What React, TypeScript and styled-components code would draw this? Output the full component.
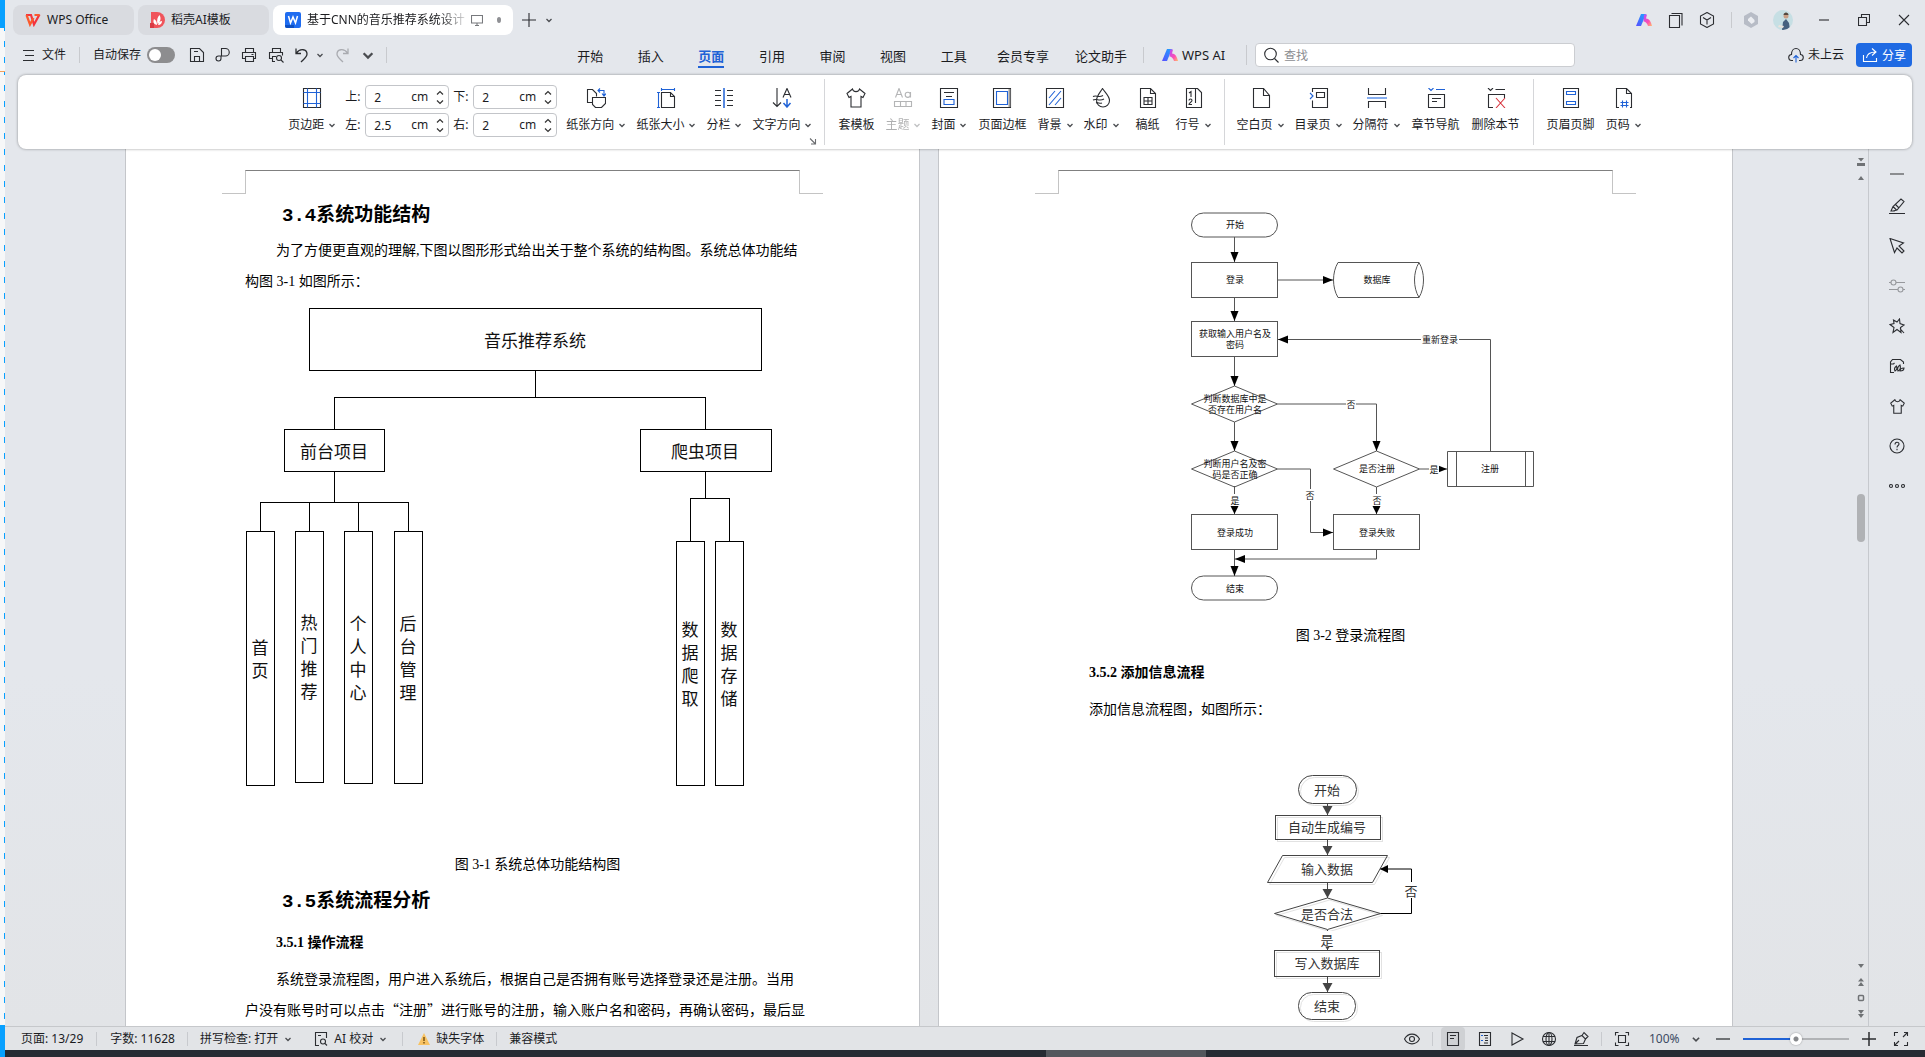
import React from "react";
import styled, { createGlobalStyle, css } from "styled-components";

const UI = `"Noto Sans", "Noto Sans CJK SC", sans-serif`;
const CJK = `"Noto Sans CJK SC", sans-serif`;
const SERIF = `"Liberation Serif", "Noto Sans CJK SC", serif`;
const MONO = `"Liberation Mono", "Noto Sans CJK SC", monospace`;
const INK = "#2b2d31";
const BLUE = "#1f62d6";

const GlobalStyle = createGlobalStyle`
  * { box-sizing: border-box; }
  body { margin: 0; background: #e4e7ec; font-family: ${UI}; font-size: 12px; color: #1b1c1f; }
  button, input { font: inherit; color: inherit; }
  button { border: 0; background: none; padding: 0; white-space: nowrap; }
  h2, h3, p, figure { margin: 0; }
`;

/* ---------- shell ---------- */

const Desktop = styled.div`
  display: flex;
  height: 100vh;
  overflow: hidden;
`;

const BackWindow = styled.div`
  flex: 0 0 5px;
  display: flex;
  flex-direction: column;
  background: #f6f7f8;
`;

const BackBlock = styled.div<{ $h: number }>`
  height: ${(p) => p.$h}px;
  background: #08a0ff;
`;

const BackEdge = styled.div<{ $h?: number }>`
  ${(p) => (p.$h ? `height: ${p.$h}px;` : "flex: 1;")}
  border-bottom: 1px solid ${(p) => (p.$h ? "#f3a05c" : "transparent")};
  background: linear-gradient(#08a0ff 40%, transparent 40%) right 13px / 1px 16px repeat-y;
`;

const Shell = styled.div`
  flex: 1;
  min-width: 0;
  display: flex;
  flex-direction: column;
`;

/* ---------- title bar ---------- */

const TitleBar = styled.header`
  display: flex;
  align-items: center;
  height: 38px;
  padding: 2px 0 0 8px;
`;

const Tab = styled.div<{ $w: number; $active?: boolean }>`
  display: flex;
  align-items: center;
  gap: 6px;
  width: ${(p) => p.$w}px;
  height: 30px;
  margin-right: 4px;
  padding: 0 12px;
  border-radius: 8px;
  background: ${(p) => (p.$active ? "#fff" : "#d9dbe0")};
`;

const TabTitle = styled.span<{ $fade?: boolean }>`
  white-space: nowrap;
  line-height: 20px;
  ${(p) =>
    p.$fade &&
    css`
      mask-image: linear-gradient(to right, #000 84%, rgba(0, 0, 0, 0.15));
    `}
`;

const UnsavedDot = styled.span`
  width: 6px;
  height: 6px;
  margin-left: 8px;
  border-radius: 50%;
  background: #8f9094;
`;

const IconButton = styled.button<{ $w?: number; $h?: number; $active?: boolean }>`
  display: flex;
  align-items: center;
  justify-content: center;
  flex: none;
  width: ${(p) => p.$w ?? 24}px;
  height: ${(p) => p.$h ?? 24}px;
  border-radius: 4px;
  background: ${(p) => (p.$active ? "#cfd1d4" : "none")};
`;

const Spacer = styled.div`
  flex: 1;
`;

const Divider = styled.span<{ $h?: number; $m?: number }>`
  flex: none;
  width: 1px;
  height: ${(p) => p.$h ?? 16}px;
  margin: 0 ${(p) => p.$m ?? 0}px;
  background: #c8cace;
`;

/* ---------- menu row ---------- */

const MenuRow = styled.div`
  display: flex;
  align-items: center;
  height: 37px;
  padding: 0 13px 3px 17px;
`;

const QuickBar = styled.div`
  display: flex;
  align-items: center;
`;

const FileButton = styled.button`
  display: flex;
  align-items: center;
  gap: 6px;
  line-height: 20px;
`;

const AutoSave = styled.label`
  display: flex;
  align-items: center;
  gap: 6px;
  margin-right: 9px;
  line-height: 20px;
`;

const Switch = styled.input`
  appearance: none;
  width: 28px;
  height: 16px;
  margin: 0;
  padding: 2px;
  border-radius: 8px;
  background: #8d8d8f;
  &::before {
    content: "";
    display: block;
    width: 12px;
    height: 12px;
    border-radius: 50%;
    background: #fff;
  }
`;

const MenuNav = styled.nav`
  display: flex;
  align-items: center;
  margin: 0 auto;
  padding-right: 48px;
  font-size: 13px;
`;

const EvenMenus = styled.div`
  display: flex;
  width: 424px;
`;

const MenuItem = styled.button<{ $active?: boolean; $wide?: boolean }>`
  ${(p) => (p.$wide ? "padding: 0 13px;" : "flex: 1;")}
  ${(p) => p.$active && `color: ${BLUE}; font-weight: 700;`}
`;

const MenuText = styled.span<{ $active?: boolean }>`
  display: inline-block;
  padding-top: 4px;
  line-height: 20px;
  border-bottom: 2px solid ${(p) => (p.$active ? BLUE : "transparent")};
`;

const AiButton = styled.button`
  display: flex;
  align-items: center;
  gap: 4px;
  margin: 0 21px 0 15px;
  line-height: 20px;
`;

const SearchBox = styled.label`
  display: flex;
  align-items: center;
  gap: 5px;
  width: 320px;
  height: 24px;
  margin-left: 8px;
  padding: 0 7px;
  border: 1px solid #cbcdd1;
  border-radius: 4px;
  background: #fff;
  font-size: 12px;
`;

const SearchInput = styled.input`
  flex: 1;
  min-width: 0;
  border: 0;
  outline: 0;
  padding: 0;
  background: none;
  &::placeholder { color: #8b8d91; opacity: 1; }
`;

const CloudButton = styled.button`
  display: flex;
  align-items: center;
  gap: 4px;
  margin-right: 12px;
  line-height: 20px;
`;

const ShareButton = styled.button`
  display: flex;
  align-items: center;
  gap: 4px;
  height: 24px;
  padding: 0 6px;
  border-radius: 4px;
  background: #1f6ae3;
  color: #fff;
`;

/* ---------- ribbon ---------- */

const Ribbon = styled.section`
  position: relative;
  z-index: 1;
  display: flex;
  justify-content: center;
  height: 74px;
  margin: 0 13px;
  border-radius: 8px;
  background: #fff;
  box-shadow: 0 0 3px rgba(0, 0, 0, 0.4);
`;

const RibbonGroup = styled.div`
  display: flex;
  align-items: flex-start;
  padding-top: 13px;
`;

const Tool = styled.button<{ $menu?: boolean; $off?: boolean }>`
  display: flex;
  flex-direction: column;
  align-items: center;
  gap: 9px;
  min-width: 46px;
  padding: 0 ${(p) => (p.$menu ? 5 : 6)}px;
  opacity: ${(p) => (p.$off ? 0.35 : 1)};
`;

const ToolLabel = styled.span`
  display: flex;
  align-items: center;
  gap: 4px;
  line-height: 16px;
`;

const RibbonRule = styled.span`
  align-self: center;
  width: 1px;
  height: 66px;
  margin: 0 7px;
  background: #d5d6d9;
`;

const Launcher = styled.button`
  align-self: flex-end;
  display: flex;
  width: 8px;
  height: 8px;
  margin: 0 0 4px -8px;
`;

const Margins = styled.div`
  display: grid;
  grid-template-columns: 16px 84px 16px 84px;
  gap: 4px;
  margin: -3px 4px 0;
  align-items: center;
`;

const MarginLabel = styled.label`
  white-space: nowrap;
  line-height: 16px;
`;

const Spin = styled.div`
  display: flex;
  align-items: center;
  height: 24px;
  padding: 0 3px 0 8px;
  border: 1px solid #c3c5c9;
  border-radius: 4px;
`;

const SpinInput = styled.input`
  width: 37px;
  border: 0;
  outline: 0;
  padding: 0;
  background: none;
`;

const SpinUnit = styled.span`
  flex: 1;
  line-height: 16px;
`;

const SpinButtons = styled.span`
  display: flex;
  flex-direction: column;
  gap: 5px;
`;

const SpinButton = styled.button`
  display: flex;
  padding: 0 1px;
`;

/* ---------- workspace ---------- */

const Workspace = styled.div`
  flex: 1;
  min-height: 0;
  display: flex;
  background: linear-gradient(#e4e7ec 60%, #e2e4e7);
`;

const Canvas = styled.main`
  flex: 1;
  min-width: 0;
  display: flex;
  justify-content: center;
  gap: 18px;
  overflow: hidden;
`;

const Page = styled.article`
  flex: 0 0 795px;
  overflow: hidden;
  padding-top: 21px;
  border: solid #c4c6ca;
  border-width: 0 1px;
  background: #fff;
  color: #000;
`;

const HeaderMarks = styled.div`
  display: flex;
  height: 24px;
  margin: 0 96px;
`;

const MarkTick = styled.span`
  width: 23px;
  border-bottom: 1px solid #c4c4c4;
`;

const MarkBox = styled.span`
  flex: 1;
  border: solid #c4c4c4;
  border-width: 1px 1px 0;
  border-top-color: #808080;
`;

const Body = styled.div`
  padding: 0 119px;
  font-size: 14px;
`;

const H2 = styled.h2`
  padding: 3px 0 0 37px;
  font: 700 19px/38px ${MONO};
`;

const H3 = styled.h3`
  padding: 2px 0 0 31px;
  font: 700 14px/40px ${SERIF};
`;

const Para = styled.p<{ $cjk?: boolean }>`
  font-family: ${(p) => (p.$cjk ? CJK : SERIF)};
  line-height: 31px;
  white-space: nowrap;
`;

const Line = styled.span<{ $indent?: boolean }>`
  display: block;
  padding-left: ${(p) => (p.$indent ? 31 : 0)}px;
`;

const Caption = styled.figcaption`
  padding-left: 30px;
  text-align: center;
  font-family: ${SERIF};
  line-height: 31px;
`;

const Drawing = styled.svg<{ $size: number; $ink?: string }>`
  display: block;
  width: 100%;
  overflow: visible;
  font-family: ${CJK};
  font-size: ${(p) => p.$size}px;
  text-anchor: middle;
  fill: none;
  stroke-width: 1px;
  text { stroke: none; fill: ${(p) => p.$ink ?? "#111"}; dominant-baseline: central; }
`;

const ScrollColumn = styled.div`
  flex: 0 0 15px;
  display: flex;
  flex-direction: column;
  align-items: center;
  padding: 5px 0 4px;
`;

const ScrollButton = styled.button`
  display: flex;
  align-items: center;
  justify-content: center;
  width: 12px;
  height: 16px;
`;

const Track = styled.div`
  flex: 1;
  display: flex;
  flex-direction: column;
`;

const TrackSpace = styled.span<{ $grow: number }>`
  flex: ${(p) => p.$grow};
`;

const Thumb = styled.span`
  width: 8px;
  height: 48px;
  border-radius: 4px;
  background: #b0b2b5;
`;

const SidePanel = styled.aside`
  flex: 0 0 57px;
  display: flex;
  flex-direction: column;
  align-items: center;
  gap: 16px;
  padding-top: 21px;
  border-left: 1px solid #c6c9ce;
`;

/* ---------- status bar ---------- */

const StatusBar = styled.footer`
  display: flex;
  align-items: center;
  height: 24px;
  padding: 0 12px 0 16px;
  border-top: 1px solid #c6c8cb;
  background: #e2e4e7;
`;

const StatusItem = styled.button<{ $gap?: number }>`
  display: flex;
  align-items: center;
  gap: 6px;
  margin-right: ${(p) => p.$gap ?? 0}px;
  line-height: 20px;
`;

const StatusTools = styled.div`
  display: flex;
  align-items: center;
  gap: 8px;
  margin-left: auto;
`;

const ZoomValue = styled.button`
  display: flex;
  align-items: center;
  justify-content: space-between;
  width: 61px;
  padding: 0 2px 0 7px;
  color: #3c4a63;
`;

const ZoomSlider = styled.input`
  appearance: none;
  width: 106px;
  height: 14px;
  margin: 0;
  background: linear-gradient(to right, ${BLUE} 50%, #b1b3b6 50%) center / 100% 2px no-repeat;
  &::-webkit-slider-thumb {
    appearance: none;
    width: 12px;
    height: 12px;
    border-radius: 50%;
    background: radial-gradient(#86888b 2px, #fff 3px);
    box-shadow: 0 0 2px rgba(0, 0, 0, 0.4);
  }
`;

const Taskbar = styled.div`
  display: flex;
  height: 7px;
  background: #272b33;
`;

const TaskSlot = styled.span<{ $grow: number; $lit?: boolean }>`
  flex: ${(p) => p.$grow};
  background: ${(p) => (p.$lit ? "#54575d" : "none")};
`;

/* ---------- icons ---------- */

const Glyph = styled.svg`
  flex: none;
  fill: none;
`;

type IconProps = { s?: number; w?: number; c?: string; children: React.ReactNode };
const Icon = ({ s = 16, w, c = INK, children }: IconProps) => (
  <Glyph width={w ?? s} height={s} viewBox={`0 0 ${w ?? s} ${s}`} stroke={c} strokeWidth={1.1} aria-hidden="true">
    {children}
  </Glyph>
);

const Chevron = ({ s = 8, c = "#4a4c50" }: { s?: number; c?: string }) => (
  <Glyph width={s} height={s} viewBox="0 0 8 8" stroke={c} strokeWidth={1.3} aria-hidden="true">
    <path d="M1.500 3l2.500 2.500L6.500 3" />
  </Glyph>
);

const Shirt = ({ s = 20 }: { s?: number }) => (
  <Glyph width={s} height={s} viewBox="0 0 20 20" stroke={INK} strokeWidth={(20 / s) * 1.1} aria-hidden="true">
    <path d="M6.500 1L1 5.500l2 4 2-1V19h10V8.500l2 1 2-4L13.500 1C13 4.500 7 4.500 6.500 1z" />
  </Glyph>
);

const AiLogo = () => (
  <svg width="16" height="14" viewBox="0 0 16 14" aria-hidden="true">
    <defs>
      <linearGradient id="aiA" x1="0" y1="1" x2="1" y2="0"><stop offset="0" stopColor="#5a4dff" /><stop offset="1" stopColor="#19a8ff" /></linearGradient>
      <linearGradient id="aiB" x1="0" y1="0" x2="1" y2="1"><stop offset="0" stopColor="#b04cff" /><stop offset=".6" stopColor="#ff4fb0" /><stop offset="1" stopColor="#ffc06a" /></linearGradient>
    </defs>
    <path d="M5 1h5L5 13H0z" fill="url(#aiA)" />
    <path d="M8 1.500h3l-1 4c3 0 5 3 6 7.500H12C11 10 9.500 8.500 7.500 8.500z" fill="url(#aiB)" />
  </svg>
);

const toolIcons: Record<string, React.ReactNode> = {
  margins: <><path d="M1.500.500h17v19h-17z" /><path d="M5.500.500v19M14.500.500v19M1.500 4.500h17M1.500 15.500h17" stroke={BLUE} /></>,
  orient: <><path d="M6.500 14.500h-5V1.500h5l4 4v3" /><path d="M6.500 9.500h13v6l-4 4h-6l-3-3z" fill="#fff" /><path d="M12 2.500h6v5M14 .500l-2 2 2 2M16 5.500l2 2.500 2-2.500" stroke={BLUE} /></>,
  size: <><path d="M5.500 4.500h9l4 4v11h-13zM14.500 4.500v4h4" /><path d="M2.500 4.500v15M1 4.500h3M1 19.500h3M5.500 1.500h13M5.500 0v3M18.500 0v3" stroke={BLUE} /></>,
  columns: <><path d="M1 2.500h6M1 7.500h6M1 12.500h6M1 17.500h6M13 2.500h6M13 7.500h6M13 12.500h6M13 17.500h6" /><path d="M10 0v20" stroke={BLUE} strokeWidth={1.500} /></>,
  textdir: <><path d="M5 0v18M1 14.500l4 4 4-4M11 9.500l4-9 4 9M12.300 6.500h5.400" /><path d="M15 11v8M11.500 15l3.500 4 3.500-4" stroke={BLUE} strokeWidth={1.500} /></>,
  theme: <><path d="M2.500 9.500l3.500-9 3.500 9M3.600 6.500h5M17.500 4v5.500" /><circle cx="14.800" cy="6.800" r="2.600" /><path d="M1.500 13.500h17v5h-17zM7.500 13.500v5M13 13.500v5" /></>,
  cover: <><path d="M1.500.500h17v19h-17zM5 4.500h10M7 8.500h6" /><path d="M5 11.500h10v5H5z" stroke={BLUE} /></>,
  border: <><path d="M1.500.500h17v19h-17z" /><path d="M17.500 1v18" stroke="#999" strokeWidth={2} /><path d="M4.500 3.500h11v13h-11z" stroke={BLUE} /></>,
  backgr: <><path d="M1.500.500h17v19h-17z" /><path d="M4 10l6-7M4 17L16 3M10 17l6-7" stroke={BLUE} /></>,
  water: <path d="M10.500.500C8 4.500 4.500 8 4.500 12.500a6.500 6.500 0 0013 0C17.500 8 13 4.500 10.500.500zM1 8.500c4-2 5 2 10-1M1 12c4-2 6 2 11-1M4 15c3-1 3 1 6 0" />,
  grid: <><path d="M2.500.500h10l5 5v14h-15zM12.500.500v5h5" /><path d="M6 9.500h8v7H6zM10 9.500v7M6 13h8" /></>,
  lineno: <><path d="M2.500.500h11l4 4v15h-15z" /><path d="M11.500 1v14M5 5l2-1.500V9M5 12.500c0-2 3-2 3 0 0 1.500-3 2-3 4h3" /></>,
  blank: <path d="M2.500.500h10l6 7v12h-16zM12.500.500v7h6" />,
  toc: <><path d="M3.500 4V.500h15v19h-15v-7" /><path d="M7.500 4.500h8v5h-8z" /><path d="M1 5l3 3-3 3" stroke={BLUE} /></>,
  sect: <><path d="M1.500 0v6.500h17V0M1.500 20v-6.500h17V20" /><path d="M0 10h20" stroke="#86aef0" strokeWidth={2} /></>,
  nav: <><path d="M2.500 6.500h16v13h-16zM6 10.500h9M6 13.500h5" /><path d="M2.500 0L5 2.500 7.500 0M10 1.500h9" stroke={BLUE} /></>,
  del: <><path d="M2 0l2.500 2.500L7 0M9.500 1.500H19M18.500 10V6.500h-16v13H7" /><path d="M10 10l9 10M19 10l-9 10" stroke="#d8323c" /></>,
  hf: <><path d="M2.500.500h15v19h-15z" /><path d="M5.500 3.500h9v3h-9zM5.500 13.500h9v3h-9z" stroke={BLUE} /></>,
  pageno: <><path d="M5 19.500H2.500v-19h10l5 5v14H16M12.500.500v5h5" /><path d="M8.500 12.500v7M12.500 12.500v7M6.500 14.500h8M6.500 17.500h8" stroke={BLUE} /></>,
};

type ToolDef = { icon: string; label: string; menu?: boolean; off?: boolean };
const RibbonTool = ({ icon, label, menu, off }: ToolDef) => (
  <Tool $menu={menu} $off={off} disabled={off}>
    {icon === "shirt" ? <Shirt /> : <Icon s={20}>{toolIcons[icon]}</Icon>}
    <ToolLabel>{label}{menu && <Chevron />}</ToolLabel>
  </Tool>
);

const layoutTools: ToolDef[] = [
  { icon: "orient", label: "纸张方向", menu: true },
  { icon: "size", label: "纸张大小", menu: true },
  { icon: "columns", label: "分栏", menu: true },
  { icon: "textdir", label: "文字方向", menu: true },
];
const styleTools: ToolDef[] = [
  { icon: "shirt", label: "套模板" },
  { icon: "theme", label: "主题", menu: true, off: true },
  { icon: "cover", label: "封面", menu: true },
  { icon: "border", label: "页面边框" },
  { icon: "backgr", label: "背景", menu: true },
  { icon: "water", label: "水印", menu: true },
  { icon: "grid", label: "稿纸" },
  { icon: "lineno", label: "行号", menu: true },
];
const structureTools: ToolDef[] = [
  { icon: "blank", label: "空白页", menu: true },
  { icon: "toc", label: "目录页", menu: true },
  { icon: "sect", label: "分隔符", menu: true },
  { icon: "nav", label: "章节导航" },
  { icon: "del", label: "删除本节" },
];
const headerTools: ToolDef[] = [
  { icon: "hf", label: "页眉页脚" },
  { icon: "pageno", label: "页码", menu: true },
];

const margins = [
  { id: "m-top", label: "上:", value: "2" },
  { id: "m-bottom", label: "下:", value: "2" },
  { id: "m-left", label: "左:", value: "2.5" },
  { id: "m-right", label: "右:", value: "2" },
];

const menus = ["开始", "插入", "页面", "引用", "审阅", "视图", "工具"];

const quick: { name: string; w: number; art: React.ReactNode }[] = [
  { name: "保存", w: 26, art: <path d="M1.500 1.500h9l4 4v9h-13zM5.500 14.500v-5h5v5M5 4.500h4" /> },
  { name: "输出为PDF", w: 26, art: <path d="M6.500 8.500V1.500h4a3.500 3.500 0 010 7.500H3.500a2.500 2.500 0 102.500 2.500v-3" /> },
  { name: "打印", w: 26, art: <path d="M4.500 5V1.500h8V5M4 11.500H1.500v-6h13v6H12M4.500 9.500h8v5h-8zM10.500 7.500h2" /> },
  { name: "打印预览", w: 28, art: <><path d="M4.500 5V1.500h8V5M4 11.500H1.500v-6h13v3M7 14.500H4.500v-5H8" /><circle cx="11" cy="11" r="2.500" /><path d="M13 13l2.500 2.500" /></> },
];

/* ---------- diagrams ---------- */

const VText = ({ x, y, text }: { x: number; y: number; text: string }) => (
  <>{[...text].map((ch, i) => <text key={i} x={x} y={y + i * 23}>{ch}</text>)}</>
);

const StructureChart = () => (
  <Drawing $size={17} viewBox="245 297 555 552" stroke="#000" role="img" aria-label="系统总体功能结构图">
    <g shapeRendering="crispEdges">
      <rect x="309.500" y="308.500" width="452" height="62" />
      <path d="M535.500 370v27M334.500 429v-31.500h371v31.500" />
      <rect x="284.500" y="429.500" width="100" height="42" />
      <rect x="640.500" y="429.500" width="131" height="42" />
      <path d="M334.500 471v31M260.500 532v-29.500h148v29.500M309.500 502v30M358.500 502v30" />
      <path d="M705.500 471v27M690.500 541v-42.500h39v42.500" />
      <rect x="246.500" y="531.500" width="28" height="254" />
      <rect x="295.500" y="531.500" width="28" height="251" />
      <rect x="344.500" y="531.500" width="28" height="252" />
      <rect x="394.500" y="531.500" width="28" height="252" />
      <rect x="676.500" y="541.500" width="28" height="244" />
      <rect x="715.500" y="541.500" width="28" height="244" />
    </g>
    <text x="535" y="339">音乐推荐系统</text>
    <text x="334" y="450">前台项目</text>
    <text x="705" y="450">爬虫项目</text>
    <VText x={260} y={646} text="首页" />
    <VText x={309} y={621} text="热门推荐" />
    <VText x={358} y={622} text="个人中心" />
    <VText x={408} y={622} text="后台管理" />
    <VText x={690} y={628} text="数据爬取" />
    <VText x={729} y={628} text="数据存储" />
  </Drawing>
);

type Dir = "d" | "l" | "r";
const Head = ({ x, y, dir = "d", len = 10, half = 4, c = "#000" }: { x: number; y: number; dir?: Dir; len?: number; half?: number; c?: string }) => {
  const turn = { d: 0, l: 90, r: -90 }[dir];
  return <path d={`M0 0L${-half} ${-len}H${half}z`} transform={`translate(${x} ${y}) rotate(${turn})`} fill={c} stroke="none" />;
};

const Tag = ({ x, y, text, w = 10, h = 12 }: { x: number; y: number; text: string; w?: number; h?: number }) => (
  <>
    <rect x={x - w / 2} y={y - h / 2} width={w} height={h} fill="#fff" stroke="none" />
    <text x={x} y={y}>{text}</text>
  </>
);

const LoginFlow = () => (
  <Drawing $size={9} viewBox="1058 194 555 426" stroke="#555" role="img" aria-label="登录流程图">
    <rect x="1191.500" y="213" width="86" height="24" rx="12" />
    <path d="M1234.500 237v25M1234.500 298v24M1234.500 357v29M1234.500 422v29M1234.500 486v28M1234.500 550v26" />
    <rect x="1191.500" y="262.500" width="86" height="35" />
    <path d="M1278 280h55" />
    <path d="M1419 262.500h-81c-6 10-6 25 0 35h81c-6-10-6-25 0-35c6 10 6 25 0 35" />
    <rect x="1191.500" y="321.500" width="86" height="35" />
    <path d="M1278 339.500h212.500V451" />
    <path d="M1191.500 404l43-18 43 18-43 18z" />
    <path d="M1277.500 404h99V451" />
    <path d="M1191.500 469l43-18 43 18-43 18zM1333.500 469l43-18 43 18-43 18z" />
    <path d="M1419.500 469h28M1277.500 469h33v63.500h23M1376.500 487v27M1376.500 550v9h-142" />
    <path d="M1447.500 451.500h86v35h-86zM1456.500 451.500v35M1525.500 451.500v35" />
    <rect x="1191.500" y="514.500" width="86" height="35" />
    <rect x="1333.500" y="514.500" width="86" height="35" />
    <rect x="1191.500" y="576" width="86" height="24" rx="12" />
    <Head x={1234.5} y={262} /><Head x={1234.5} y={321} /><Head x={1234.5} y={386} /><Head x={1234.5} y={451} />
    <Head x={1234.5} y={576} /><Head x={1376.5} y={451} />
    <Head x={1333} y={280} dir="r" /><Head x={1278} y={339.5} dir="l" />
    <Head x={1447} y={469} dir="r" /><Head x={1333} y={532.5} dir="r" /><Head x={1235} y={559} dir="l" />
    <Tag x={1440} y={339} text="重新登录" w={38} />
    <Tag x={1351} y={404} text="否" />
    <Tag x={1434} y={469} text="是" />
    <Tag x={1310} y={495} text="否" />
    <Tag x={1235} y={500} text="是" />
    <Tag x={1377} y={500} text="否" />
    <Head x={1234.5} y={514} len={8} /><Head x={1376.5} y={514} len={8} />
    <text x="1235" y="224">开始</text>
    <text x="1235" y="279">登录</text>
    <text x="1377" y="279">数据库</text>
    <text x="1235" y="333">获取输入用户名及</text>
    <text x="1235" y="344">密码</text>
    <text x="1235" y="398">判断数据库中是</text>
    <text x="1235" y="409">否存在用户名</text>
    <text x="1235" y="463">判断用户名及密</text>
    <text x="1235" y="474">码是否正确</text>
    <text x="1377" y="468">是否注册</text>
    <text x="1490" y="468">注册</text>
    <text x="1235" y="532">登录成功</text>
    <text x="1377" y="532">登录失败</text>
    <text x="1235" y="588">结束</text>
  </Drawing>
);

const addShapes = (
  <>
    <rect x="1298.500" y="776.500" width="58" height="28" rx="14" />
    <rect x="1275.500" y="816.500" width="105" height="24" />
    <path d="M1282.500 856.500h105l-15 27h-105z" />
    <path d="M1274.500 914.500l53-15.500 53 15.500-53 16z" />
    <rect x="1274.500" y="951.500" width="105" height="26" />
    <rect x="1298.500" y="993.500" width="57" height="27" rx="13" />
  </>
);

const AddFlow = () => (
  <Drawing $size={13} $ink="#333" viewBox="1058 725 555 340" stroke="#444" role="img" aria-label="添加信息流程图">
    <g stroke="#e2e2e2" transform="translate(2 2)">{addShapes}</g>
    {addShapes}
    <path d="M1327.500 805v11M1327.500 841v15M1327.500 884v15M1327.500 931v20M1327.500 978v15" />
    <path d="M1380.500 914.500h31V870h-31" stroke="#000" />
    <Head x={1327.5} y={816} len={9} half={5} c="#444" />
    <Head x={1327.5} y={856} len={9} half={5} c="#444" />
    <Head x={1327.5} y={899} len={9} half={5} c="#444" />
    <Head x={1327.5} y={993} len={9} half={5} c="#444" />
    <Head x={1380} y={870} dir="l" len={8} />
    <Tag x={1411} y={891} text="否" w={12} h={16} />
    <Tag x={1327} y={940} text="是" w={14} h={16} />
    <Head x={1327.5} y={951} len={3} half={2} c="#444" />
    <text x="1327" y="790">开始</text>
    <text x="1327" y="827">自动生成编号</text>
    <text x="1327" y="869">输入数据</text>
    <text x="1327" y="914">是否合法</text>
    <text x="1327" y="963">写入数据库</text>
    <text x="1327" y="1006">结束</text>
  </Drawing>
);

const PageMarks = () => (
  <HeaderMarks><MarkTick /><MarkBox /><MarkTick /></HeaderMarks>
);

/* ---------- side and status icons ---------- */

const side: { name: string; c?: string; h?: number; art: React.ReactNode }[] = [
  { name: "收起", c: "#8b8d90", h: 8, art: <path d="M1 8h14" strokeWidth={2} /> },
  { name: "编辑", art: <path d="M0 15.500h16M2 13l2-4.500 8-7.500 3 2.500-7 8.500-4 1zM4 8.500l3.500 3.500M6.500 6.500l3 3M2 13h4" /> },
  { name: "选择", art: <path d="M1 .500l13.500 4.500-4.500 3 5 5-2 2-5-5-2.500 4.500z" /> },
  { name: "设置", c: "#96989c", art: <><circle cx="4.500" cy="4.500" r="2.500" /><circle cx="11.500" cy="11.500" r="2.500" /><path d="M0 4.500h2M7 4.500h9M0 11.500h9M14 11.500h2" /></> },
  { name: "魔法", art: <path d="M10.500 1l.500 4.500 4 1.500-3.500 2.500.500 5-4-3-4 3 1-5L1 6.500l4-1L4.500 2 8 4zM11 10.500l4 4.500" /> },
  { name: "图文", art: <path d="M5 14.500H1.500V4l2-2.500h8l3 2.500v2M1.500 6h3l1-1M6 13c-1-2 0-4 1.500-5 1 2 0 4-1.500 5zM9 13c-1-2 0-5 2-6 1 3 0 5-2 6zM11 13c0-2 2-3 4-3 0 2-2 3-4 3z" /> },
  { name: "主题", art: null },
  { name: "帮助", art: <><circle cx="8" cy="8" r="7" /><path d="M6 6.500c0-3 4-3 4-.500 0 1.500-2 1.500-2 3.500M8 10.800v1.400" /></> },
  { name: "更多", art: <><circle cx="2" cy="8" r="1.500" /><circle cx="8" cy="8" r="1.500" /><circle cx="14" cy="8" r="1.500" /></> },
];

const views: { name: string; on?: boolean; art: React.ReactNode }[] = [
  { name: "页面视图", on: true, art: <path d="M2.500 1.500h11v13h-11zM5 4.500h6M5 7.500h4" /> },
  { name: "大纲", art: <><path d="M2.500 1.500h11v13h-11zM7 4.500h4M8 7h3M8 9.500h3M7 12h4" /><path d="M4 4.500h2M4 9.500h2" stroke={BLUE} /></> },
  { name: "阅读版式", art: <path d="M3 2l11 6-11 6z" /> },
  { name: "Web版式", art: <><circle cx="8" cy="8" r="6.500" /><ellipse cx="8" cy="8" rx="3" ry="6.500" /><path d="M2 5.500h12M2 10.500h12M8 1.500v13" /></> },
  { name: "写作模式", art: <path d="M1 14.500h14M2 13l2-6.500 5-2 3.500 3.500-2 4.500zM9 4.500l2-3 4 4-2.500 2.500M2 13l4-4" /> },
];

const App = () => (
  <>
    <GlobalStyle />
    <Desktop>
      <BackWindow>
        <BackBlock $h={28} />
        <BackEdge $h={44} />
        <BackEdge />
        <BackBlock $h={32} />
      </BackWindow>
      <Shell>
        <TitleBar>
          <Tab $w={121}>
            <svg width="16" height="14" viewBox="0 0 16 14" fill="none" strokeWidth="2.200" aria-hidden="true">
              <path d="M1 2h5l3 9.500L14.500 1.500" stroke="#f5333d" /><path d="M1.500 2L5 11.500 8.500 5M9.500 2h5" stroke="#fb5a2c" />
            </svg>
            <TabTitle>WPS Office</TabTitle>
          </Tab>
          <Tab $w={131}>
            <svg width="15" height="16" viewBox="0 0 15 16" aria-hidden="true">
              <path d="M1 0h6a8 8 0 010 16H1z" fill="#f0545b" /><path d="M0 11h4v5H0z" fill="#d93a44" />
              <path d="M7 13c-4-1-4-4-3-6 2 1 3 3 3 6zM7.500 12c-1-4 0-7 2-9 2 3 1 7-2 9zM8 13c1-3 2-4 4-4 0 2-1 4-4 4z" fill="#fff" />
            </svg>
            <TabTitle>稻壳AI模板</TabTitle>
          </Tab>
          <Tab $w={240} $active>
            <Glyph width="16" height="16" viewBox="0 0 16 16" aria-hidden="true">
              <rect width="16" height="16" rx="2" fill="#1f6cf0" /><path d="M0 13h9v3H2a2 2 0 01-2-2z" fill="#0d4fc2" />
              <path d="M3.500 4l2 7L8 5l2.500 6 2-7" fill="none" stroke="#fff" strokeWidth="1.500" />
            </Glyph>
            <TabTitle $fade>基于CNN的音乐推荐系统设计</TabTitle>
            <Icon s={12} c="#77797d"><path d="M.500 1.500h11v7.500H.500zM4 11.500h4M6 9v2" /></Icon>
            <UnsavedDot />
          </Tab>
          <IconButton aria-label="新建标签"><Icon s={14}><path d="M7 0v14M0 7h14" /></Icon></IconButton>
          <IconButton $w={16} aria-label="标签列表"><Chevron /></IconButton>
          <Spacer />
          <IconButton $w={36} aria-label="WPS AI"><AiLogo /></IconButton>
          <IconButton $w={28} aria-label="窗口"><Icon><path d="M1.500 3.500h10v12h-10zM3.500 1.500h10.500v12" /></Icon></IconButton>
          <IconButton $w={34} aria-label="应用"><Icon><path d="M8 .500l6.500 3.500v8L8 15.500 1.500 12V4zM4 5.500l4 2.500 4-2.500M8 8v4.500" /></Icon></IconButton>
          <Divider $m={7} />
          <IconButton aria-label="会员">
            <svg width="16" height="16" viewBox="0 0 16 16" aria-hidden="true"><path d="M8 0l7 4v8l-7 4-7-4V4z" fill="#b7bcc6" /><path d="M5 7l3-2.500 3.500 3.500v2L8.500 12 5 8.500z" fill="#eceef2" /></svg>
          </IconButton>
          <IconButton $w={40} aria-label="账户">
            <svg width="20" height="20" viewBox="0 0 20 20" aria-hidden="true">
              <clipPath id="av"><circle cx="10" cy="10" r="10" /></clipPath>
              <g clipPath="url(#av)"><rect width="20" height="20" fill="#c6dfe4" /><path d="M9 20l1-8 3-3 3 4 1 7z" fill="#46617f" /><circle cx="13" cy="6" r="2.500" fill="#c99f86" /><path d="M10.500 5c0-3.500 5-3.500 5 0z" fill="#55483f" /><path d="M6 15l5 1-1 2-5-1z" fill="#e9e4dc" /></g>
            </svg>
          </IconButton>
          <IconButton $w={42} aria-label="最小化"><Icon s={12}><path d="M1 6h10" /></Icon></IconButton>
          <IconButton $w={38} aria-label="还原"><Icon s={12}><path d="M.500 3.500h8v8h-8zM3.500 3V.500h8v8H9" /></Icon></IconButton>
          <IconButton $w={42} aria-label="关闭"><Icon s={12}><path d="M1 1l10 10M11 1L1 11" /></Icon></IconButton>
        </TitleBar>

        <MenuRow>
          <QuickBar>
            <FileButton><Icon s={14}><path d="M1 2.500h11M3 7.500h9M1 12.500h11" /></Icon>文件</FileButton>
            <Divider $m={13} />
            <AutoSave>自动保存<Switch type="checkbox" role="switch" /></AutoSave>
            {quick.map((q) => (
              <IconButton key={q.name} $w={q.w} aria-label={q.name}><Icon>{q.art}</Icon></IconButton>
            ))}
            <IconButton aria-label="撤销"><Icon><path d="M2 1.500v5h5M2.500 6C6 1 13 2 13 7c0 3-3 5-6 8" strokeWidth={1.300} /></Icon></IconButton>
            <IconButton $w={12} aria-label="撤销列表"><Chevron /></IconButton>
            <IconButton $w={32} aria-label="重做"><Icon c="#a9abb0"><path d="M14 1.500v5H9M13.500 6C10 1 3 2 3 7c0 3 3 5 6 8" strokeWidth={1.300} /></Icon></IconButton>
            <IconButton $w={20} aria-label="更多"><Chevron s={14} /></IconButton>
            <Divider $m={8} />
          </QuickBar>

          <MenuNav>
            <EvenMenus>
              {menus.map((m) => (
                <MenuItem key={m} $active={m === "页面"}><MenuText $active={m === "页面"}>{m}</MenuText></MenuItem>
              ))}
            </EvenMenus>
            <MenuItem $wide><MenuText>会员专享</MenuText></MenuItem>
            <MenuItem $wide><MenuText>论文助手</MenuText></MenuItem>
            <Divider $m={3} />
            <AiButton><AiLogo />WPS AI</AiButton>
            <Divider $h={20} />
            <SearchBox>
              <Icon s={18} w={16}><circle cx="7.500" cy="8" r="5.800" /><path d="M11.500 12.500l4 4" /></Icon>
              <SearchInput type="search" placeholder="查找" aria-label="查找" />
            </SearchBox>
          </MenuNav>

          <CloudButton>
            <Icon><path d="M5 13.500H4a3 3 0 01-.500-6C3.500 4 5.500 1.500 8 1.500s4.500 2.500 4.500 6a3 3 0 01-.500 6h-1" /><path d="M8 15.500V8.500M5.500 11L8 8.500l2.500 2.500" stroke={BLUE} /></Icon>
            未上云
          </CloudButton>
          <ShareButton>
            <Icon c="#fff"><path d="M1.500 8v6.500h13V11M10 1.500L14 5l-4 3.500M14 5C8 5 5 7 4.500 11" /></Icon>
            分享
          </ShareButton>
        </MenuRow>

        <Ribbon>
          <RibbonGroup>
            <RibbonTool icon="margins" label="页边距" menu />
            <Margins>
              {margins.map((m) => (
                <React.Fragment key={m.id}>
                  <MarginLabel htmlFor={m.id}>{m.label}</MarginLabel>
                  <Spin>
                    <SpinInput id={m.id} defaultValue={m.value} />
                    <SpinUnit>cm</SpinUnit>
                    <SpinButtons>
                      <SpinButton aria-label="增加"><Glyph width="8" height="5" viewBox="0 0 8 5" stroke="#333" strokeWidth="1.200"><path d="M1 4.500l3-3 3 3" /></Glyph></SpinButton>
                      <SpinButton aria-label="减少"><Glyph width="8" height="5" viewBox="0 0 8 5" stroke="#333" strokeWidth="1.200"><path d="M1 .500l3 3 3-3" /></Glyph></SpinButton>
                    </SpinButtons>
                  </Spin>
                </React.Fragment>
              ))}
            </Margins>
            {layoutTools.map((t) => <RibbonTool key={t.label} {...t} />)}
            <Launcher aria-label="页面设置"><Icon s={8} c="#6b6d70"><path d="M1 1.500l5 5M6.500 2v5H2" /></Icon></Launcher>
          </RibbonGroup>
          <RibbonRule />
          <RibbonGroup>{styleTools.map((t) => <RibbonTool key={t.label} {...t} />)}</RibbonGroup>
          <RibbonRule />
          <RibbonGroup>{structureTools.map((t) => <RibbonTool key={t.label} {...t} />)}</RibbonGroup>
          <RibbonRule />
          <RibbonGroup>{headerTools.map((t) => <RibbonTool key={t.label} {...t} />)}</RibbonGroup>
        </Ribbon>

        <Workspace>
          <Canvas>
            <Page>
              <PageMarks />
              <Body>
                <H2>3.4系统功能结构</H2>
                <Para>
                  <Line $indent>为了方便更直观的理解,下图以图形形式给出关于整个系统的结构图。系统总体功能结</Line>
                  <Line>构图 3-1 如图所示：</Line>
                </Para>
                <figure>
                  <StructureChart />
                  <Caption>图 3-1 系统总体功能结构图</Caption>
                </figure>
                <H2>3.5系统流程分析</H2>
                <H3>3.5.1 操作流程</H3>
                <Para $cjk>
                  <Line $indent>系统登录流程图，用户进入系统后，根据自己是否拥有账号选择登录还是注册。当用</Line>
                  <Line>户没有账号时可以点击“注册”进行账号的注册，输入账户名和密码，再确认密码，最后显</Line>
                </Para>
              </Body>
            </Page>
            <Page>
              <PageMarks />
              <Body>
                <figure>
                  <LoginFlow />
                  <Caption>图 3-2 登录流程图</Caption>
                </figure>
                <H3>3.5.2 添加信息流程</H3>
                <Para $cjk><Line $indent>添加信息流程图，如图所示：</Line></Para>
                <AddFlow />
              </Body>
            </Page>
          </Canvas>
          <ScrollColumn>
            <ScrollButton aria-label="标尺"><Icon s={8} c="none"><path d="M1 0h6L4 3.500zM0 5h8v3H0z" fill="#6f7275" /></Icon></ScrollButton>
            <ScrollButton aria-label="向上"><Icon s={8} c="none"><path d="M4 2l3 4H1z" fill="#6f7275" /></Icon></ScrollButton>
            <Track><TrackSpace $grow={17} /><Thumb /><TrackSpace $grow={23} /></Track>
            <ScrollButton aria-label="向下"><Icon s={8} c="none"><path d="M4 6l3-4H1z" fill="#6f7275" /></Icon></ScrollButton>
            <ScrollButton aria-label="上一页"><Icon s={8} c="none"><path d="M4 0l3 3.500H1zM4 4l3 4H1z" fill="#6f7275" /></Icon></ScrollButton>
            <ScrollButton aria-label="选择浏览对象"><Icon s={8} c="#6f7275"><rect x="1.500" y="1.500" width="5" height="5" rx="1" strokeWidth={1.500} /></Icon></ScrollButton>
            <ScrollButton aria-label="下一页"><Icon s={8} c="none"><path d="M4 4l3-4H1zM4 8l3-4H1z" fill="#6f7275" /></Icon></ScrollButton>
          </ScrollColumn>
          <SidePanel>
            {side.map((s) => (
              <IconButton key={s.name} $h={s.h} aria-label={s.name}>
                {s.art ? <Icon c={s.c}>{s.art}</Icon> : <Shirt s={15} />}
              </IconButton>
            ))}
          </SidePanel>
        </Workspace>

        <StatusBar>
          <StatusItem>页面: 13/29</StatusItem>
          <Divider $h={14} $m={13} />
          <StatusItem>字数: 11628</StatusItem>
          <Divider $h={14} $m={12} />
          <StatusItem $gap={22}>拼写检查: 打开 <Chevron /></StatusItem>
          <StatusItem>
            <Icon s={14}><path d="M5 13.500H1.500V.500h11V6M4 3.500h3" /><circle cx="9" cy="9.500" r="2.500" /><path d="M11 11.500l2 2" /></Icon>
            AI 校对 <Chevron />
          </StatusItem>
          <Divider $h={14} $m={15} />
          <StatusItem>
            <svg width="12" height="12" viewBox="0 0 12 12" aria-hidden="true"><path d="M6 0l6 12H0z" fill="#f8c262" /><path d="M6 4v4M6 9v1.500" stroke="#7a5310" strokeWidth="1.500" /></svg>
            缺失字体
          </StatusItem>
          <Divider $h={14} $m={12} />
          <StatusItem>兼容模式</StatusItem>
          <StatusTools>
            <IconButton aria-label="护眼模式"><Icon><path d="M.500 8C4 1.500 12 1.500 15.500 8 12 14.500 4 14.500.500 8z" /><circle cx="8" cy="8" r="2.500" /></Icon></IconButton>
            <Divider $h={14} />
            {views.map((v) => (
              <IconButton key={v.name} $active={v.on} aria-label={v.name}><Icon>{v.art}</Icon></IconButton>
            ))}
            <Divider $h={14} />
            <IconButton aria-label="适合页面"><Icon><path d="M1.500 4.500v-3h3M11.500 1.500h3v3M14.500 11.500v3h-3M4.500 14.500h-3v-3M4.500 4.500h7v7h-7z" /></Icon></IconButton>
            <ZoomValue>100%<Chevron s={10} /></ZoomValue>
            <IconButton aria-label="缩小"><Icon s={14} c="#6f7275"><path d="M0 7h14" strokeWidth={2} /></Icon></IconButton>
            <ZoomSlider type="range" min={0} max={100} defaultValue={50} aria-label="显示比例" />
            <IconButton aria-label="放大"><Icon s={14}><path d="M0 7h14M7 0v14" strokeWidth={1.500} /></Icon></IconButton>
            <IconButton aria-label="全屏"><Icon><path d="M1.500 5V1.500H5M11 1.500h3.500V5M14.500 11v3.500H11M5 14.500H1.500V11M14 2l-4 4M2 14l4-4" /></Icon></IconButton>
          </StatusTools>
        </StatusBar>
        <Taskbar>
          <TaskSlot $grow={1041} /><TaskSlot $grow={160} $lit /><TaskSlot $grow={719} />
        </Taskbar>
      </Shell>
    </Desktop>
  </>
);

export default App;
